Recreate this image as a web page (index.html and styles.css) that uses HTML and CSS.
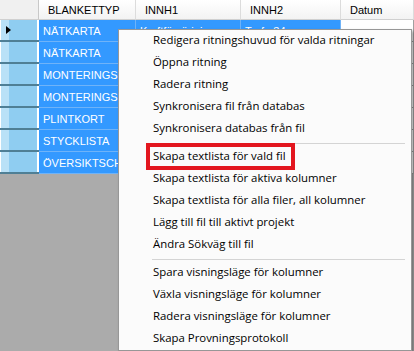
FILE: index.html
```html
<!DOCTYPE html>
<html lang="sv">
<head>
<meta charset="utf-8">
<title>Ritningslista</title>
<link rel="stylesheet" href="styles.css">
</head>
<body>
<div class="screen">
  <div class="grid">
    <div class="hcell corner"></div>
    <div class="hcell">BLANKETTYP</div>
    <div class="hcell">INNH1</div>
    <div class="hcell">INNH2</div>
    <div class="hcell">Datum</div>

    <div class="rowhead current"><span class="arrow"></span></div>
    <div class="cell sel">NÄTKARTA</div>
    <div class="cell sel">Kraftförsörjning</div>
    <div class="cell sel">Trafo 34</div>
    <div class="cell"></div>

    <div class="rowhead"></div>
    <div class="cell sel">NÄTKARTA</div>
    <div class="cell sel">Kraftförsörjning</div>
    <div class="cell sel">Trafo 35</div>
    <div class="cell"></div>

    <div class="rowhead"></div>
    <div class="cell sel">MONTERINGSRITNING</div>
    <div class="cell sel">Kabelskåp</div>
    <div class="cell sel">KS 12</div>
    <div class="cell"></div>

    <div class="rowhead"></div>
    <div class="cell sel">MONTERINGSRITNING</div>
    <div class="cell sel">Kabelskåp</div>
    <div class="cell sel">KS 13</div>
    <div class="cell"></div>

    <div class="rowhead"></div>
    <div class="cell sel">PLINTKORT</div>
    <div class="cell sel">Station</div>
    <div class="cell sel">S 4</div>
    <div class="cell"></div>

    <div class="rowhead"></div>
    <div class="cell sel">STYCKLISTA</div>
    <div class="cell sel">Station</div>
    <div class="cell sel">S 4</div>
    <div class="cell"></div>

    <div class="rowhead"></div>
    <div class="cell sel">ÖVERSIKTSCHEMA</div>
    <div class="cell sel">Station</div>
    <div class="cell sel">S 4</div>
    <div class="cell"></div>
  </div>

  <ul class="menu">
    <li class="item">Redigera ritningshuvud för valda ritningar</li>
    <li class="item">Öppna ritning</li>
    <li class="item">Radera ritning</li>
    <li class="item">Synkronisera fil från databas</li>
    <li class="item">Synkronisera databas från fil</li>
    <li class="sep"></li>
    <li class="item"><span class="hl">Skapa textlista för vald fil</span></li>
    <li class="item">Skapa textlista för aktiva kolumner</li>
    <li class="item">Skapa textlista för alla filer, all kolumner</li>
    <li class="item">Lägg till fil till aktivt projekt</li>
    <li class="item">Ändra Sökväg till fil</li>
    <li class="sep"></li>
    <li class="item">Spara visningsläge för kolumner</li>
    <li class="item">Växla visningsläge för kolumner</li>
    <li class="item">Radera visningsläge för kolumner</li>
    <li class="item">Skapa Provningsprotokoll</li>
  </ul>
</div>
</body>
</html>
```

FILE: styles.css
```css
* { box-sizing: border-box; }

html, body {
  margin: 0;
  padding: 0;
}

body {
  background: #ababab;
  font-family: "Liberation Sans", Arial, sans-serif;
}

.screen {
  position: relative;
  width: 414px;
  height: 351px;
  overflow: hidden;
  background: #ababab;
}

.grid {
  display: grid;
  grid-template-columns: 39px 97px 105px 100px 1fr;
  grid-auto-rows: 22px;
  grid-template-rows: 20px;
  font-size: 11px;
}

.hcell {
  display: flex;
  align-items: center;
  padding-left: 9px;
  background: linear-gradient(#ffffff, #f3f3f3);
  border-right: 1px solid #dcdcdc;
  border-bottom: 1px solid #d0d0d0;
  color: #000;
  white-space: nowrap;
  overflow: hidden;
}

.hcell.corner {
  background: #f0f0f0;
  border-right: 1px solid #c8c8c8;
}

.rowhead {
  display: flex;
  align-items: center;
  padding-left: 6px;
  background: linear-gradient(to right, #ffffff 0 1px, #b9e1f7 1px 9px, #8fcdf1 9px 37px, #ffffff 37px);
  border-bottom: 2px solid #4f7f95;
}

.arrow {
  width: 0;
  height: 0;
  border-left: 5px solid #000;
  border-top: 4px solid transparent;
  border-bottom: 4px solid transparent;
}

.cell {
  display: flex;
  align-items: center;
  padding-left: 4px;
  background: #ffffff;
  border-right: 1px solid #a0a0a0;
  border-bottom: 1px solid #a0a0a0;
  white-space: nowrap;
  overflow: hidden;
  color: #000;
}

.cell.sel {
  background: #3399ff;
  color: #ffffff;
  border-right-color: #6fb3f8;
  border-bottom-color: #6fb3f8;
}

.menu {
  position: absolute;
  left: 118px;
  top: 29px;
  width: 294px;
  margin: 0;
  padding: 0;
  list-style: none;
  background: #fbfbfb;
  border: 1px solid #979797;
  box-shadow: 2px 2px 3px rgba(0, 0, 0, 0.35);
  font-family: "Open Sans", "Noto Sans", sans-serif;
  font-size: 11.4px;
  color: #000;
}

.item {
  height: 22px;
  line-height: 20px;
  padding-left: 34px;
  white-space: nowrap;
}

.sep {
  height: 1px;
  margin: 3px 6px 2px 33px;
  background: #d4d4d4;
}

.hl {
  position: relative;
  display: inline-block;
}

.hl::after {
  content: "";
  position: absolute;
  left: -7px;
  right: -9px;
  top: -3px;
  bottom: -4px;
  border: 4px solid #e3161f;
}
```
